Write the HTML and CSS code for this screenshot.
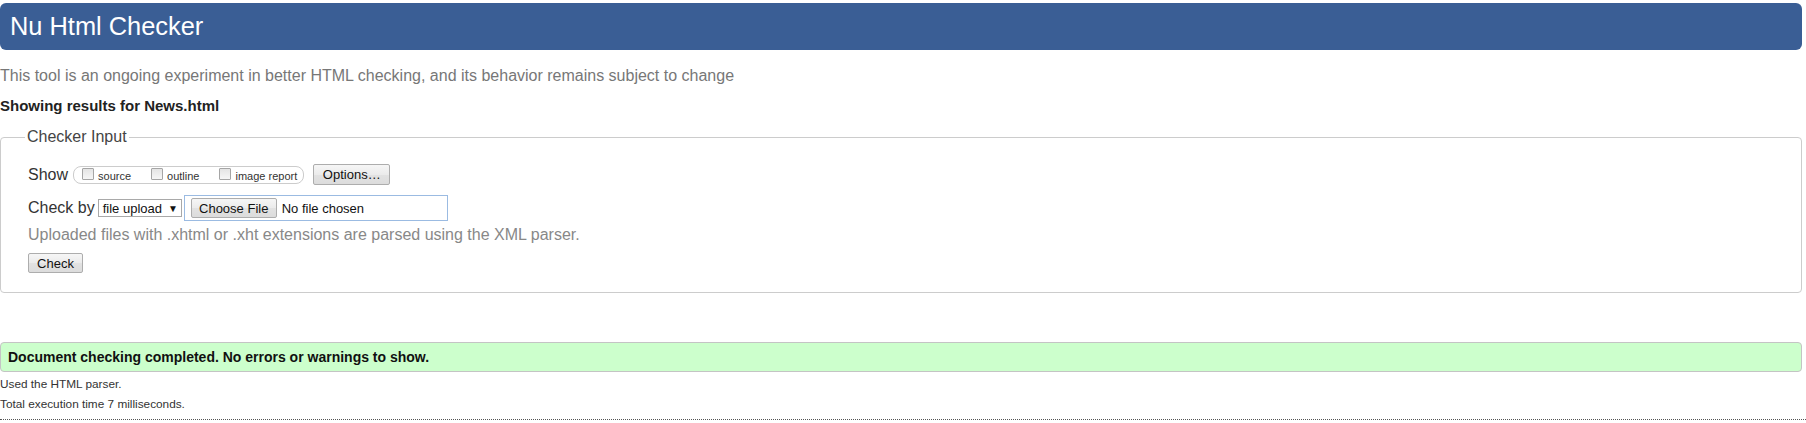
FILE: index.html
```html
<!DOCTYPE html>
<html lang="en">
<head>
<meta charset="utf-8">
<title>Nu Html Checker</title>
<link rel="stylesheet" href="styles.css">
</head>
<body>
<main class="page">
  <header class="banner"><h1 class="title">Nu Html Checker</h1></header>
  <p class="tagline">This tool is an ongoing experiment in better HTML checking, and its behavior remains subject to change</p>
  <p class="showing">Showing results for News.html</p>
  <form class="checker">
    <fieldset class="panel">
      <legend class="panel-legend">Checker Input</legend>
      <div class="row row-show">
        <span class="label">Show</span>
        <span class="show-box">
          <label class="opt"><span class="cb"></span>source</label>
          <label class="opt"><span class="cb"></span>outline</label>
          <label class="opt"><span class="cb"></span>image report</label>
        </span>
        <button class="btn btn-options" type="button">Options…</button>
      </div>
      <div class="row row-check">
        <span class="label">Check by</span>
        <span class="select">file upload<span class="arrow">▼</span></span>
        <span class="file-box"><span class="btn btn-file">Choose File</span><span class="file-name">No file chosen</span></span>
      </div>
      <p class="hint">Uploaded files with .xhtml or .xht extensions are parsed using the XML parser.</p>
      <div class="row row-submit"><button class="btn btn-check" type="button">Check</button></div>
    </fieldset>
  </form>
  <div class="success">Document checking completed. No errors or warnings to show.</div>
</main>
<p class="details">Used the HTML parser.</p>
<p class="details">Total execution time 7 milliseconds.</p>
<hr class="end">
</body>
</html>
```
FILE: styles.css
```css
html, body { background: #fff; }
body {
  margin: 0;
  font-family: "Liberation Sans", Arial, sans-serif;
  color: #222;
}
.page { padding-right: 4px; }

.banner {
  margin-top: 3px;
  height: 47px;
  background: #3a5e95;
  border-radius: 6px;
}
.title {
  margin: 0;
  padding-left: 10px;
  font-size: 25.4px;
  font-weight: normal;
  line-height: 47px;
  color: #fff;
}

.tagline {
  margin: 16px 0 0;
  font-size: 16px;
  line-height: 20px;
  color: #777;
}
.showing {
  margin: 10px 0 0;
  font-size: 15px;
  font-weight: bold;
  line-height: 20px;
  color: #222;
}

.checker { margin: 0; }
.panel {
  margin: 12px 0 0;
  padding: 0 0 19px 27px;
  border: 1px solid #ccc;
  border-radius: 4px;
  min-width: 0;
}
.panel-legend {
  margin-left: -3px;
  padding: 0 2px;
  font-size: 16px;
  color: #444;
}

.row {
  display: flex;
  align-items: center;
}
.label {
  font-size: 16px;
  color: #333;
}
.row-show { margin-top: 18px; height: 21px; }
.show-box {
  display: flex;
  align-items: center;
  height: 16px;
  margin-left: 5px;
  padding: 0 6px 0 8px;
  border: 1px solid #ccc;
  border-radius: 8px;
}
.opt {
  display: flex;
  align-items: center;
  margin-right: 20px;
  font-size: 11px;
  color: #333;
  line-height: 12px;
  padding-top: 3px;
}
.opt:last-child { margin-right: 0; }
.cb {
  width: 10px;
  height: 10px;
  margin: -5px 4px 0 0;
  border: 1px solid #a5a5a5;
  border-radius: 1px;
  background: linear-gradient(#e4e4e4, #f6f6f6);
}

.btn {
  display: inline-flex;
  align-items: center;
  justify-content: center;
  box-sizing: border-box;
  height: 20px;
  padding: 0;
  border: 1px solid #adadad;
  border-radius: 2px;
  background: linear-gradient(#f6f6f6, #ebebeb 50%, #e2e2e2 51%, #dcdcdc);
  font-family: "Liberation Sans", Arial, sans-serif;
  font-size: 13px;
  color: #111;
}
.btn-options { margin-left: 9px; width: 77px; height: 21px; }

.row-check { margin-top: 10px; height: 26px; }
.select {
  display: inline-flex;
  align-items: center;
  box-sizing: border-box;
  width: 84px;
  height: 18px;
  margin-left: 3px;
  padding-left: 4px;
  border: 1px solid #a9a9a9;
  font-size: 13px;
  color: #111;
}
.arrow {
  margin-left: 6px;
  font-size: 10px;
}
.file-box {
  display: inline-flex;
  align-items: center;
  box-sizing: border-box;
  width: 264px;
  height: 26px;
  margin-left: 2px;
  padding-left: 6px;
  border: 1px solid #9bbbe2;
}
.btn-file { width: 86px; }
.file-name {
  margin-left: 5px;
  font-size: 13px;
  color: #111;
}

.hint {
  margin: 4px 0 0;
  font-size: 16px;
  line-height: 20px;
  color: #888;
}
.row-submit { margin-top: 8px; }
.btn-check { width: 55px; }

.success {
  margin-top: 49px;
  box-sizing: border-box;
  height: 30px;
  padding-left: 7px;
  border: 1px solid #c4c4c4;
  border-radius: 4px;
  background: #ccffcc;
  font-size: 14px;
  font-weight: bold;
  line-height: 28px;
  color: #111;
}

.details {
  margin: 5px 0 0;
  font-size: 11.8px;
  line-height: 14px;
  color: #333;
}
.details + .details { margin-top: 6px; }

.end {
  margin: 8px 0 0;
  height: 0;
  border: 0;
  border-top: 1px dotted #555;
}
```
